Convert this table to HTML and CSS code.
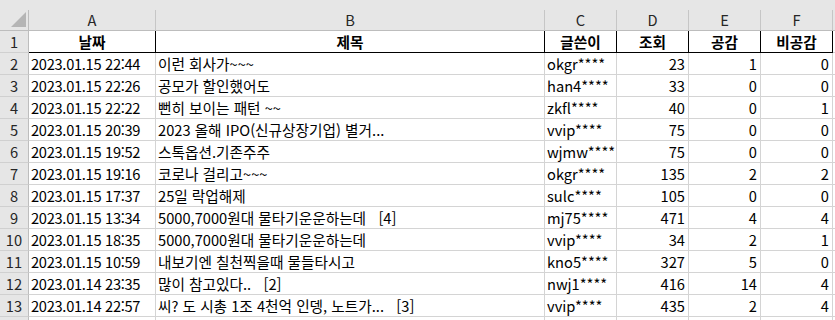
FILE: index.html
```html
<!DOCTYPE html>
<html lang="ko">
<head>
<meta charset="utf-8">
<title>Sheet</title>
<link rel="stylesheet" href="styles.css">
</head>
<body>
<div class="app">
  <div class="top-strip"></div>
  <div class="sheet">
    <div class="cell corner"><svg class="corner-tri" width="16" height="16" viewBox="0 0 16 16"><polygon points="0,15 15,15 15,0" fill="#b5b5b5"/></svg></div>
    <div class="cell colhdr">A</div>
    <div class="cell colhdr">B</div>
    <div class="cell colhdr">C</div>
    <div class="cell colhdr">D</div>
    <div class="cell colhdr">E</div>
    <div class="cell colhdr">F</div>
    <div class="cell colhdr"></div>

    <div class="cell rowhdr">1</div>
    <div class="cell title">날짜</div>
    <div class="cell title">제목</div>
    <div class="cell title">글쓴이</div>
    <div class="cell title">조회</div>
    <div class="cell title">공감</div>
    <div class="cell title">비공감</div>
    <div class="cell"></div>

    <div class="cell rowhdr">2</div>
    <div class="cell date">2023.01.15 22:44</div>
    <div class="cell">이런 회사가~~~</div>
    <div class="cell">okgr****</div>
    <div class="cell num">23</div>
    <div class="cell num">1</div>
    <div class="cell num">0</div>
    <div class="cell"></div>

    <div class="cell rowhdr">3</div>
    <div class="cell date">2023.01.15 22:26</div>
    <div class="cell">공모가 할인했어도</div>
    <div class="cell">han4****</div>
    <div class="cell num">33</div>
    <div class="cell num">0</div>
    <div class="cell num">0</div>
    <div class="cell"></div>

    <div class="cell rowhdr">4</div>
    <div class="cell date">2023.01.15 22:22</div>
    <div class="cell">뻔히 보이는 패턴 ~~</div>
    <div class="cell">zkfl****</div>
    <div class="cell num">40</div>
    <div class="cell num">0</div>
    <div class="cell num">1</div>
    <div class="cell"></div>

    <div class="cell rowhdr">5</div>
    <div class="cell date">2023.01.15 20:39</div>
    <div class="cell">2023 올해 IPO(신규상장기업) 별거...</div>
    <div class="cell">vvip****</div>
    <div class="cell num">75</div>
    <div class="cell num">0</div>
    <div class="cell num">0</div>
    <div class="cell"></div>

    <div class="cell rowhdr">6</div>
    <div class="cell date">2023.01.15 19:52</div>
    <div class="cell">스톡옵션.기존주주</div>
    <div class="cell">wjmw****</div>
    <div class="cell num">75</div>
    <div class="cell num">0</div>
    <div class="cell num">0</div>
    <div class="cell"></div>

    <div class="cell rowhdr">7</div>
    <div class="cell date">2023.01.15 19:16</div>
    <div class="cell">코로나 걸리고~~~</div>
    <div class="cell">okgr****</div>
    <div class="cell num">135</div>
    <div class="cell num">2</div>
    <div class="cell num">2</div>
    <div class="cell"></div>

    <div class="cell rowhdr">8</div>
    <div class="cell date">2023.01.15 17:37</div>
    <div class="cell">25일 락업해제</div>
    <div class="cell">sulc****</div>
    <div class="cell num">105</div>
    <div class="cell num">0</div>
    <div class="cell num">0</div>
    <div class="cell"></div>

    <div class="cell rowhdr">9</div>
    <div class="cell date">2023.01.15 13:34</div>
    <div class="cell">5000,7000원대 물타기운운하는데   [4]</div>
    <div class="cell">mj75****</div>
    <div class="cell num">471</div>
    <div class="cell num">4</div>
    <div class="cell num">4</div>
    <div class="cell"></div>

    <div class="cell rowhdr">10</div>
    <div class="cell date">2023.01.15 18:35</div>
    <div class="cell">5000,7000원대 물타기운운하는데</div>
    <div class="cell">vvip****</div>
    <div class="cell num">34</div>
    <div class="cell num">2</div>
    <div class="cell num">1</div>
    <div class="cell"></div>

    <div class="cell rowhdr">11</div>
    <div class="cell date">2023.01.15 10:59</div>
    <div class="cell">내보기엔 칠천찍을때 물들타시고</div>
    <div class="cell">kno5****</div>
    <div class="cell num">327</div>
    <div class="cell num">5</div>
    <div class="cell num">0</div>
    <div class="cell"></div>

    <div class="cell rowhdr">12</div>
    <div class="cell date">2023.01.14 23:35</div>
    <div class="cell">많이 참고있다..   [2]</div>
    <div class="cell">nwj1****</div>
    <div class="cell num">416</div>
    <div class="cell num">14</div>
    <div class="cell num">4</div>
    <div class="cell"></div>

    <div class="cell rowhdr">13</div>
    <div class="cell date">2023.01.14 22:57</div>
    <div class="cell">씨? 도 시총 1조 4천억 인뎅, 노트가...   [3]</div>
    <div class="cell">vvip****</div>
    <div class="cell num">435</div>
    <div class="cell num">2</div>
    <div class="cell num">4</div>
    <div class="cell"></div>

    <div class="cell rowhdr"></div>
    <div class="cell"></div>
    <div class="cell"></div>
    <div class="cell"></div>
    <div class="cell"></div>
    <div class="cell"></div>
    <div class="cell"></div>
    <div class="cell"></div>
  </div>
</div>
</body>
</html>
```

FILE: styles.css
```css
html, body {
  margin: 0;
  padding: 0;
  background: #ffffff;
}

.app {
  width: 835px;
  height: 320px;
  overflow: hidden;
  font-family: "Noto Sans CJK KR", "Noto Sans", sans-serif;
  font-size: 14.67px;
  color: #000000;
}

.top-strip {
  height: 10px;
  background: #e6e6e6;
}

.sheet {
  display: grid;
  grid-template-columns: 29px 127px 389px 72px 72px 72px 72px 1fr;
  grid-template-rows: 21px;
  grid-auto-rows: 22px;
}

.cell {
  box-sizing: border-box;
  border-right: 1px solid #d4d4d4;
  border-bottom: 1px solid #d4d4d4;
  padding: 0 2px;
  line-height: 21px;
  white-space: pre;
  overflow: hidden;
}

.corner {
  background: #e6e6e6;
  border-right: 1px solid #bdbdbd;
  border-bottom: 1px solid #bdbdbd;
  padding: 0;
  position: relative;
}

.corner-tri {
  position: absolute;
  left: 11px;
  top: 2px;
}

.colhdr {
  background: #e6e6e6;
  border-right: 1px solid #c6c6c6;
  border-bottom: 1px solid #bdbdbd;
  text-align: center;
  line-height: 19px;
  color: #262626;
}

.rowhdr {
  background: #e6e6e6;
  border-right: 1px solid #bdbdbd;
  border-bottom: 1px solid #d0d0d0;
  text-align: center;
  padding: 0;
  color: #262626;
}

.title {
  font-weight: 700;
  text-align: center;
  border-right: 1px solid #000000;
  border-bottom: 1px solid #000000;
}

.date {
  letter-spacing: -0.3px;
}

.num {
  text-align: right;
  padding-right: 3px;
}
```
